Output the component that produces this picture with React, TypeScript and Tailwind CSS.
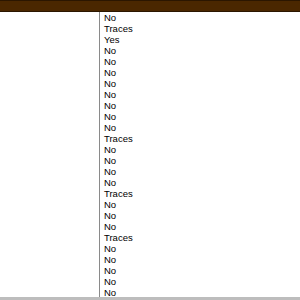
const ROWS = [
  "No", "Traces", "Yes", "No", "No", "No", "No", "No", "No", "No", "No",
  "Traces", "No", "No", "No", "No", "Traces", "No", "No", "No", "Traces",
  "No", "No", "No", "No", "No",
];

export default function App() {
  return (
    <div className="w-[300px] h-[300px] overflow-hidden bg-white font-['Liberation_Sans',Arial,sans-serif] text-[9.5px] text-black">
      <div className="h-[12px] bg-[#4a2700] border-t border-b border-[#2b1600]" />
      <div className="flex h-[285px]">
        <div className="w-[100px] border-r border-[#8a8a8a]" />
        <div className="pl-[4px]">
          {ROWS.map((r, i) => (
            <div key={i} className="leading-[11px] h-[11px]">
              {r}
            </div>
          ))}
        </div>
      </div>
      <div className="h-[3px] bg-[#bdbdbd]" />
    </div>
  );
}
